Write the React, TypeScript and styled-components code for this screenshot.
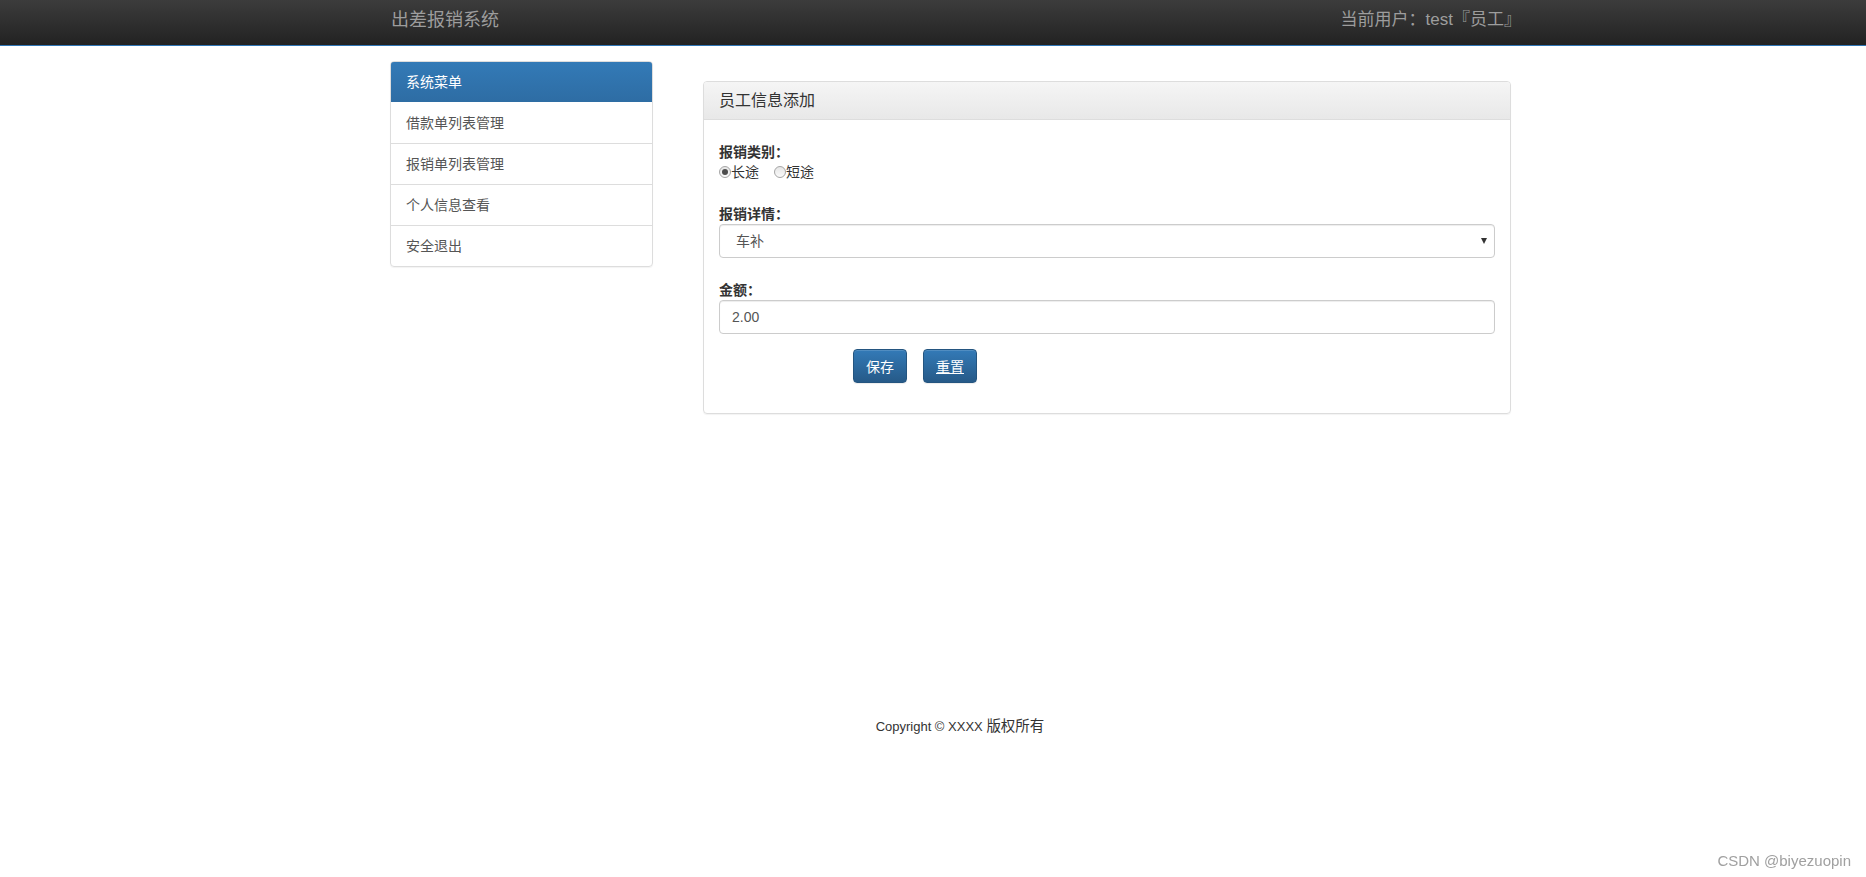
import React from "react";
import styled, { createGlobalStyle } from "styled-components";

const GlobalStyle = createGlobalStyle`
  html, body { margin: 0; padding: 0; background: #fff; }
  body {
    font-family: "Liberation Sans", Arial, "Noto Sans CJK SC", sans-serif;
    font-size: 14px;
    line-height: 20px;
    color: #333;
  }
  * { box-sizing: border-box; }
`;

const Navbar = styled.header`
  height: 46px;
  background: linear-gradient(to bottom, #3c3c3c 0%, #222 100%);
  border-bottom: 1px solid #2f75b5;
`;

const Container = styled.div`
  width: 1140px;
  margin-left: calc(50% - 543px);
`;

const NavInner = styled(Container)`
  height: 45px;
  display: flex;
  align-items: center;
  justify-content: space-between;
  padding: 0 9px 5px 1px;
`;

const Brand = styled.div`
  font-size: 18px;
  color: #9d9d9d;
  line-height: 20px;
`;

const NavText = styled.div`
  font-size: 17px;
  color: #9d9d9d;
  line-height: 20px;
`;

const Main = styled(Container)`
  display: flex;
  align-items: flex-start;
  gap: 50px;
`;

const Sidebar = styled.nav`
  width: 263px;
  margin-top: 15px;
  border: 1px solid #ddd;
  border-radius: 4px;
  overflow: hidden;
  box-shadow: 0 1px 1px rgba(0, 0, 0, 0.05);
`;

const SidebarHeader = styled.div`
  height: 41px;
  margin: -1px -1px 0;
  padding: 0 15px;
  display: flex;
  align-items: center;
  color: #fff;
  background: linear-gradient(to bottom, #337ab7 0%, #2e6da4 100%);
  border: 1px solid #2e6da4;
  border-radius: 4px 4px 0 0;
`;

const MenuItem = styled.a`
  display: flex;
  align-items: center;
  height: 41px;
  padding: 0 15px;
  color: #555;
  text-decoration: none;
  border-top: 1px solid #ddd;
  &:first-of-type { border-top: none; }
`;

const Panel = styled.section`
  width: 808px;
  margin-top: 35px;
  border: 1px solid #ddd;
  border-radius: 4px;
  box-shadow: 0 1px 1px rgba(0, 0, 0, 0.05);
`;

const PanelHeading = styled.div`
  height: 38px;
  padding: 0 15px;
  display: flex;
  align-items: center;
  font-size: 16px;
  color: #333;
  background: linear-gradient(to bottom, #f5f5f5 0%, #e8e8e8 100%);
  border-bottom: 1px solid #ddd;
  border-radius: 3px 3px 0 0;
`;

const PanelBody = styled.div`
  padding: 22px 15px 30px;
`;

const FormGroup = styled.div<{ $gap?: number }>`
  margin-bottom: ${(p) => p.$gap ?? 22}px;
`;

const Label = styled.label`
  display: block;
  font-weight: bold;
  color: #333;
  line-height: 20px;
`;

const RadioRow = styled.div`
  display: flex;
  align-items: center;
  height: 20px;
  color: #333;
`;

const RadioOption = styled.span`
  display: inline-flex;
  align-items: center;
  margin-right: 15px;
`;

const RadioDot = styled.span<{ $checked?: boolean }>`
  position: relative;
  width: 12px;
  height: 12px;
  border-radius: 50%;
  border: 1px solid #a5a5a5;
  background: linear-gradient(to bottom, #e6e6e6, #fafafa);
  &::after {
    content: "";
    display: ${(p) => (p.$checked ? "block" : "none")};
    position: absolute;
    left: 2px;
    top: 2px;
    width: 6px;
    height: 6px;
    border-radius: 50%;
    background: #4d4d4d;
  }
`;

const Field = styled.div`
  position: relative;
  height: 34px;
  border: 1px solid #ccc;
  border-radius: 4px;
  box-shadow: inset 0 1px 1px rgba(0, 0, 0, 0.075);
  display: flex;
  align-items: center;
  color: #555;
`;

const SelectText = styled.span`
  padding-left: 16px;
`;

const InputText = styled.span`
  padding-left: 12px;
`;

const Caret = styled.span`
  position: absolute;
  right: 7px;
  top: 13px;
  width: 0;
  height: 0;
  border-left: 3.5px solid transparent;
  border-right: 3.5px solid transparent;
  border-top: 6px solid #333;
`;

const ButtonRow = styled.div`
  display: flex;
  gap: 16px;
  margin-top: 15px;
  margin-left: 134px;
`;

const Button = styled.button<{ $underline?: boolean }>`
  height: 34px;
  padding: 0 12px;
  font-family: inherit;
  font-size: 14px;
  color: #fff;
  text-decoration: ${(p) => (p.$underline ? "underline" : "none")};
  background: linear-gradient(to bottom, #337ab7 0%, #265a88 100%);
  border: 1px solid #245580;
  border-radius: 4px;
  box-shadow: inset 0 1px 0 rgba(255, 255, 255, 0.15), 0 1px 1px rgba(0, 0, 0, 0.075);
  cursor: pointer;
`;

const Footer = styled.footer`
  margin-top: 302px;
  width: 1140px;
  margin-left: calc(50% - 543px);
  text-align: center;
  font-size: 13px;
  line-height: 20px;
  color: #333;
`;

const CjkText = styled.span`
  font-size: 14.5px;
`;

const Watermark = styled.div`
  position: fixed;
  right: 15px;
  bottom: 8px;
  font-size: 15px;
  line-height: 17px;
  color: #a0a0a0;
`;

export default function App() {
  const menu = ["借款单列表管理", "报销单列表管理", "个人信息查看", "安全退出"];
  return (
    <>
      <GlobalStyle />
      <Navbar>
        <NavInner>
          <Brand>出差报销系统</Brand>
          <NavText>当前用户：test『员工』</NavText>
        </NavInner>
      </Navbar>
      <Main>
        <Sidebar>
          <SidebarHeader>系统菜单</SidebarHeader>
          {menu.map((m) => (
            <MenuItem key={m} href="#">
              {m}
            </MenuItem>
          ))}
        </Sidebar>
        <Panel>
          <PanelHeading>员工信息添加</PanelHeading>
          <PanelBody>
            <FormGroup>
              <Label>报销类别：</Label>
              <RadioRow>
                <RadioOption>
                  <RadioDot $checked />
                  长途
                </RadioOption>
                <RadioOption>
                  <RadioDot />
                  短途
                </RadioOption>
              </RadioRow>
            </FormGroup>
            <FormGroup>
              <Label>报销详情：</Label>
              <Field>
                <SelectText>车补</SelectText>
                <Caret />
              </Field>
            </FormGroup>
            <FormGroup $gap={0}>
              <Label>金额：</Label>
              <Field>
                <InputText>2.00</InputText>
              </Field>
            </FormGroup>
            <ButtonRow>
              <Button>保存</Button>
              <Button $underline>重置</Button>
            </ButtonRow>
          </PanelBody>
        </Panel>
      </Main>
      <Footer>
        Copyright © XXXX <CjkText>版权所有</CjkText>
      </Footer>
      <Watermark>CSDN @biyezuopin</Watermark>
    </>
  );
}
